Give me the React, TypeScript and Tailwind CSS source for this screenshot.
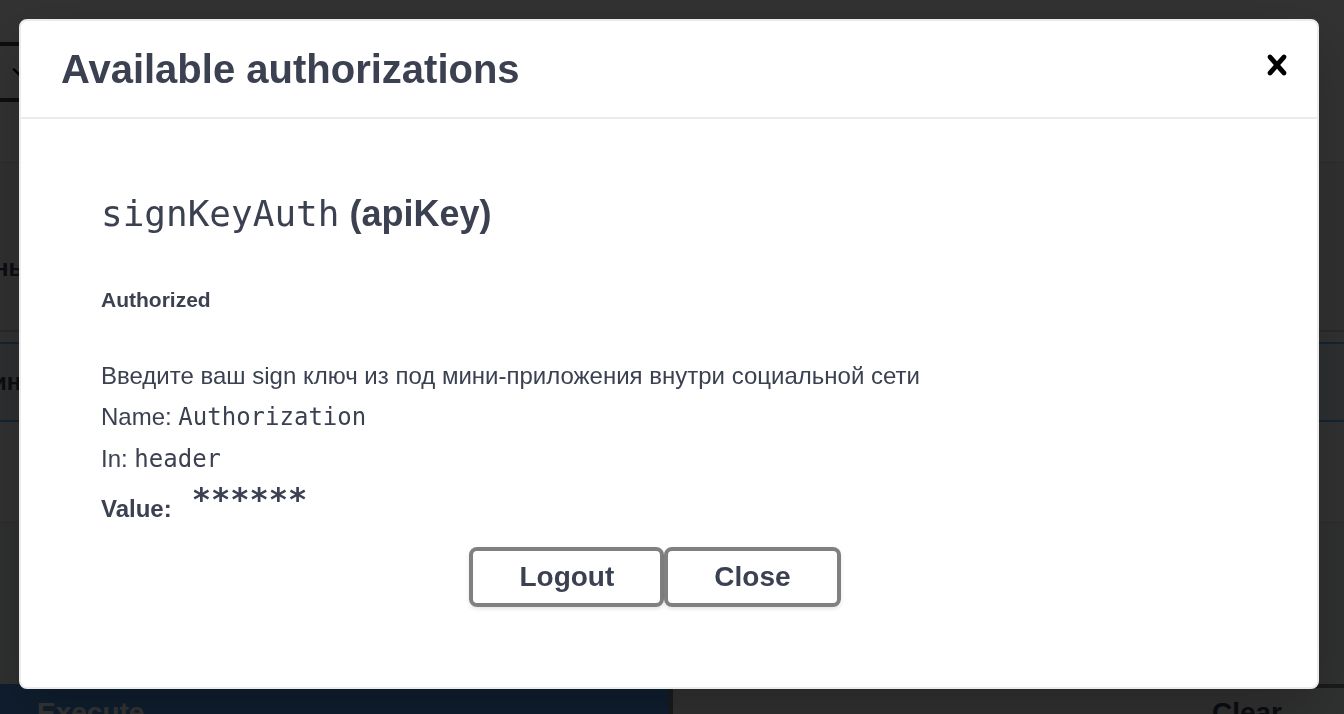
import React from "react";

function CloseIcon() {
  return (
    <svg viewBox="0 0 20 20" className="h-10 w-10 fill-black" aria-hidden="true">
      <path d="M14.348 14.849c-0.469 0.469-1.229 0.469-1.697 0l-2.651-3.030-2.651 3.029c-0.469 0.469-1.229 0.469-1.697 0-0.469-0.469-0.469-1.229 0-1.697l2.758-3.15-2.759-3.152c-0.469-0.469-0.469-1.228 0-1.697s1.228-0.469 1.697 0l2.652 3.031 2.651-3.031c0.469-0.469 1.228-0.469 1.697 0s0.469 1.229 0 1.697l-2.758 3.152 2.758 3.15c0.469 0.469 0.469 1.229 0 1.698z" />
    </svg>
  );
}

function Code({ children }: { children: React.ReactNode }) {
  return <code className="font-['DejaVu_Sans_Mono',monospace] font-normal">{children}</code>;
}

function DialogButton({ children, className = "" }: { children: React.ReactNode; className?: string }) {
  return (
    <button
      type="button"
      className={`rounded-lg border-4 border-[#808080] px-[46px] py-1.5 text-[28px] leading-10 font-bold shadow-[0_2px_4px_rgba(0,0,0,0.1)] ${className}`}
    >
      {children}
    </button>
  );
}

function PageBehind() {
  return (
    <div className="h-screen overflow-hidden bg-[#fafafa] text-[#3b4151]" aria-hidden="true">
      <div className="h-[163px] border-b border-[#d8d8d8] pt-[42px]">
        <div className="flex h-[60px] w-12 items-center rounded-r-lg border-y-4 border-[#41444e] bg-[#f7f7f7] pl-1">
          <svg viewBox="0 0 20 20" className="h-8 w-8 fill-black">
            <path d="M13.418 7.859c0.271-0.268 0.709-0.268 0.978 0 0.27 0.268 0.272 0.701 0 0.969l-3.908 3.83c-0.27 0.268-0.707 0.268-0.979 0l-3.908-3.83c-0.27-0.267-0.27-0.701 0-0.969 0.271-0.268 0.709-0.268 0.978 0l3.421 3.141 3.418-3.141z" />
          </svg>
        </div>
      </div>
      <div className="flex h-[169px] items-center border-b-2 border-[#cacaca] bg-[#f0f0f0] pt-[42px]">
        <span className="-ml-1.5 text-2xl font-bold">ны</span>
      </div>
      <div className="h-2.5 bg-[#f4f4f4]" />
      <div className="flex h-20 items-center border-y-2 border-[#61affe] bg-[#e4e8ef]">
        <span className="-ml-2 text-2xl font-bold">ин</span>
      </div>
      <div className="h-[101px] border-b border-[#d8d8d8] bg-[#eff2ee]" />
      <div className="h-[161px] bg-[#ebedf0]" />
      <div className="flex h-[60px] text-[28px] font-bold">
        <div className="w-[669px] bg-[#4990e2] pt-2 pl-[37px] text-white">Execute</div>
        <div className="flex-1 border-4 border-r-0 border-[#808080] bg-[#ebedf0] pt-1 pr-[62px] text-right">Clear</div>
      </div>
    </div>
  );
}

export default function App() {
  return (
    <div className="font-['Liberation_Sans',Arial,sans-serif]">
      <PageBehind />
      <div className="fixed inset-0 bg-black/80 pt-[19px] pr-[25px] pl-[19px]">
        <section
          role="dialog"
          aria-modal="true"
          aria-labelledby="auth-title"
          className="rounded-lg border-2 border-[#ebebeb] bg-white text-[#3b4151] shadow-[0_20px_60px_rgba(0,0,0,0.2)]"
        >
          <header className="flex items-center justify-between border-b-2 border-[#ebebeb] pt-5 pr-5 pb-5 pl-10">
            <h3 id="auth-title" className="text-[40px] leading-14 font-bold">
              Available authorizations
            </h3>
            <button type="button" aria-label="Close dialog" className="mb-2">
              <CloseIcon />
            </button>
          </header>
          <div className="px-20 pt-[71px] pb-20">
            <h4 className="text-[36px] leading-12 font-bold">
              <Code>signKeyAuth</Code> (apiKey)
            </h4>
            <h6 className="mt-[46px] text-[21px] leading-8 font-bold">Authorized</h6>
            <div className="mt-[39px] text-2xl leading-[41px]">
              <p>Введите ваш sign ключ из под мини-приложения внутри социальной сети</p>
              <p>
                Name: <Code>Authorization</Code>
              </p>
              <p>
                In: <Code>header</Code>
              </p>
            </div>
            <div className="mt-[5px] flex items-start gap-5">
              <span className="text-2xl leading-12 font-bold">Value:</span>
              <code className="font-['DejaVu_Sans_Mono',monospace] text-[32px] leading-7 font-bold">******</code>
            </div>
            <div className="mt-3.5 flex justify-center">
              <DialogButton>Logout</DialogButton>
              <DialogButton className="mr-7">Close</DialogButton>
            </div>
          </div>
        </section>
      </div>
    </div>
  );
}
